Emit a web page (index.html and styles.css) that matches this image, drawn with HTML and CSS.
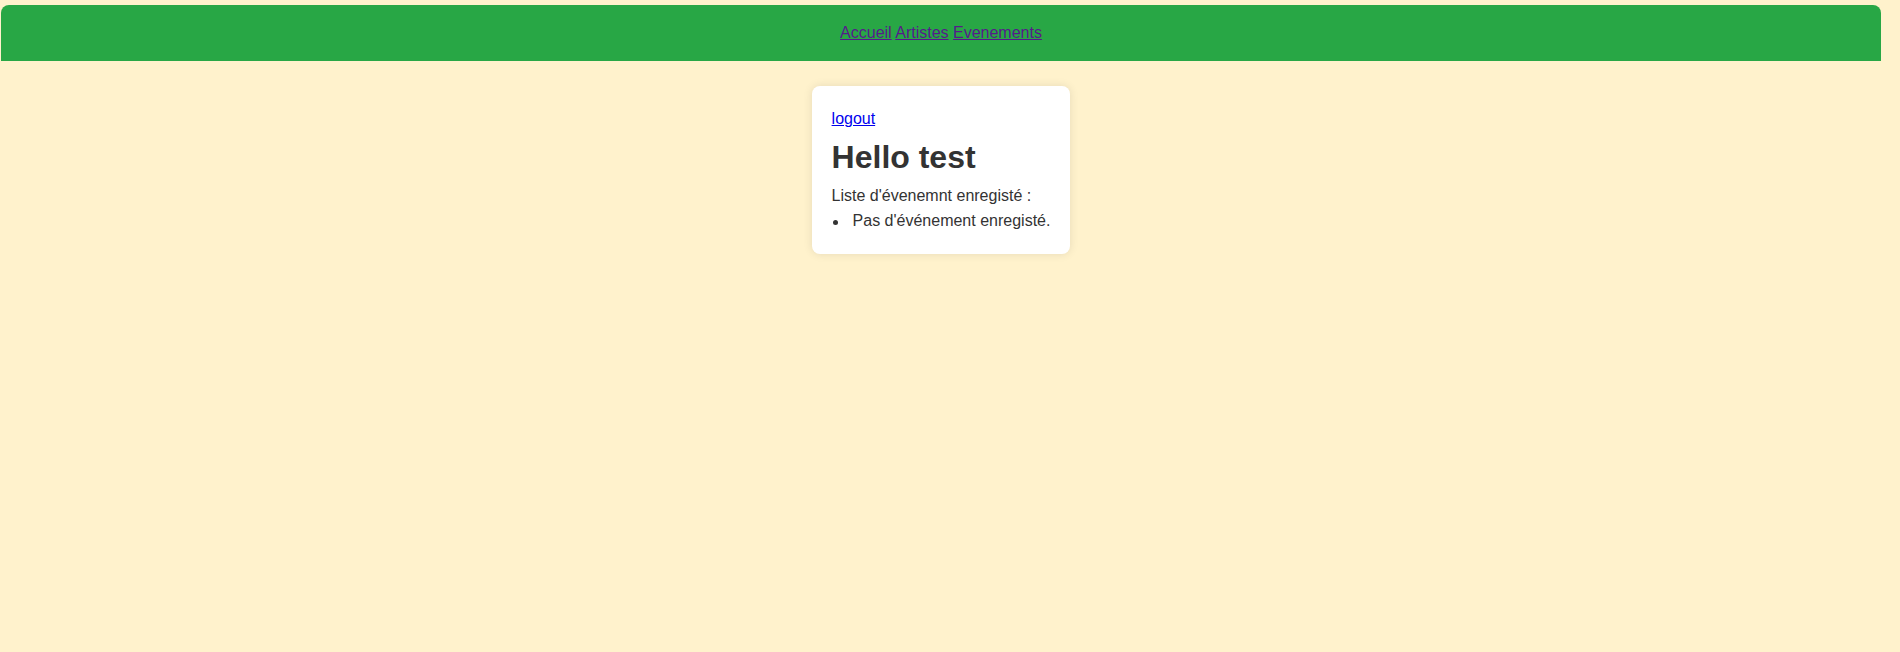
FILE: index.html
```html
<!DOCTYPE html>
<html lang="fr">
<head>
<meta charset="utf-8">
<title>Profil</title>
<link rel="stylesheet" href="styles.css">
</head>
<body>
<header class="topbar">
  <nav class="nav">
    <a href="#" class="nav-link">Accueil</a>
    <a href="#" class="nav-link">Artistes</a>
    <a href="#" class="nav-link">Evenements</a>
  </nav>
</header>
<main class="main">
  <section class="card">
    <a href="#" class="logout">logout</a>
    <h1 class="title">Hello test</h1>
    <p class="subtitle">Liste d'évenemnt enregisté :</p>
    <ul class="events">
      <li class="event">Pas d'événement enregisté.</li>
    </ul>
  </section>
</main>
</body>
</html>
```
FILE: styles.css
```css
html, body {
  margin: 0;
  padding: 0;
}
body {
  background: #fff2cc;
  font-family: "Liberation Sans", Arial, sans-serif;
  font-size: 16px;
  color: #333;
  min-height: 652px;
}
.topbar {
  margin: 5px 19px 0 1px;
  background: #28a745;
  border-radius: 8px 8px 0 0;
  padding: 18px 0;
  text-align: center;
  line-height: 20px;
}
.nav-link {
  color: #551a8b;
  text-decoration: underline;
}
.main {
  display: flex;
  justify-content: center;
  padding-top: 25px;
  padding-right: 18px;
}
.card {
  background: #fff;
  border-radius: 8px;
  box-shadow: 0 0 10px rgba(0, 0, 0, 0.1);
  padding: 21px 20px 21px;
  line-height: 24px;
}
.logout {
  color: #0000ee;
  display: inline-block;
}
.title {
  margin: 7px 0 8px;
  font-size: 32px;
  line-height: 38.4px;
  font-weight: bold;
}
.subtitle {
  margin: 0 0 1px;
}
.events {
  margin: 0;
  padding-left: 21px;
  list-style: none;
}
.event::before {
  content: "";
  display: inline-block;
  width: 5px;
  height: 5px;
  border-radius: 50%;
  background: #333;
  margin-left: -20px;
  margin-right: 15px;
  vertical-align: middle;
}
```
